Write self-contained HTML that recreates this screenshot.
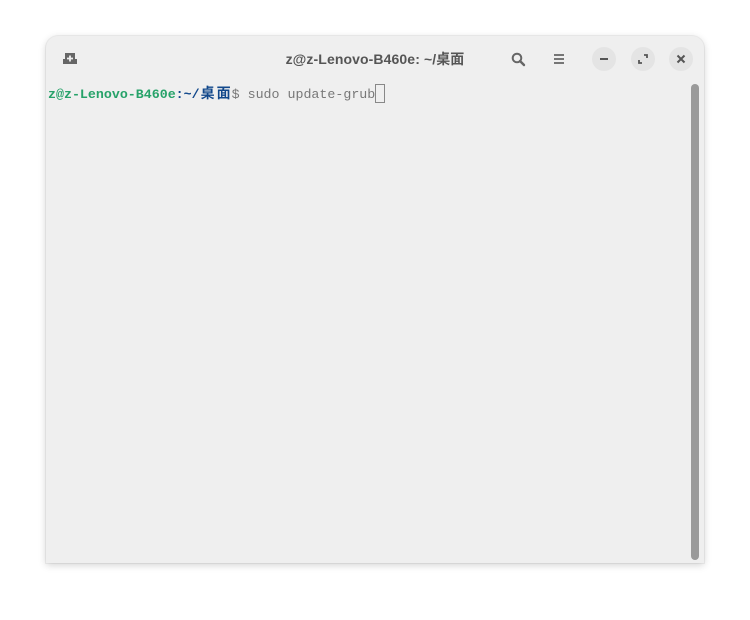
<!DOCTYPE html>
<html><head><meta charset="utf-8"><style>
html,body{margin:0;padding:0;width:750px;height:620px;background:#fff;overflow:hidden}
.win{position:absolute;left:46px;top:36px;width:658px;height:527px;background:#efefef;border-radius:12px 12px 0 0;box-shadow:0 2px 8px rgba(0,0,0,.18),0 0 0 1px rgba(0,0,0,.05)}
.title{position:absolute;left:0;right:0;top:49px;text-align:center;font:bold 14px "Liberation Sans","Noto Sans CJK SC",sans-serif;color:#555;letter-spacing:0.1px}
.btn{position:absolute;top:47px;width:24px;height:24px;border-radius:50%;background:#e4e4e4}
.term{position:absolute;left:48px;top:84px;font:13.3px "Liberation Mono","Noto Sans CJK SC",monospace;line-height:18px;white-space:pre;color:#787878}
.g{color:#26a269;font-weight:bold}.b{color:#12488b;font-weight:bold}
.w{display:inline-block;width:16px;text-align:center;font-size:14px}
.cur{display:inline-block;width:10px;height:19px;border:1px solid #888;vertical-align:-5px;box-sizing:border-box;margin-left:0}
.sb{position:absolute;left:691px;top:84px;width:8px;height:476px;border-radius:4px;background:#9a9a9a}
svg{position:absolute}
</style></head><body>
<div class="win"></div>
<svg style="left:60px;top:50px" width="20" height="18" viewBox="0 0 20 18">
<path d="M5 3h10v6h2v5H3V9h2z" fill="#666"/>
<path d="M10 5.5v6M7 8.5h6" stroke="#efefef" stroke-width="1.8"/>
</svg>
<div class="title" style="width:750px">z@z-Lenovo-B460e: ~/桌面</div>
<svg style="left:510px;top:51px" width="18" height="18" viewBox="0 0 18 18">
<circle cx="7" cy="7" r="4.3" fill="none" stroke="#666" stroke-width="2"/>
<path d="M10 10l4 4" stroke="#666" stroke-width="2.4" stroke-linecap="round"/>
</svg>
<svg style="left:551px;top:51px" width="16" height="16" viewBox="0 0 16 16">
<path d="M3 4h10M3 8h10M3 12h10" stroke="#666" stroke-width="1.8"/>
</svg>
<div class="btn" style="left:592px"></div>
<div class="btn" style="left:631px"></div>
<div class="btn" style="left:669px"></div>
<svg style="left:592px;top:47px" width="24" height="24"><path d="M8 12h8" stroke="#555" stroke-width="2"/></svg>
<svg style="left:631px;top:47px" width="24" height="24"><path d="M13 8h3v3M11 16H8v-3" fill="none" stroke="#555" stroke-width="1.8"/></svg>
<svg style="left:669px;top:47px" width="24" height="24"><path d="M8.5 8.5l7 7M15.5 8.5l-7 7" stroke="#555" stroke-width="2"/></svg>
<div class="term"><span class="g">z@z-Lenovo-B460e</span><span class="b">:~/<span class="w">桌</span><span class="w">面</span></span>$ sudo update-grub<span class="cur"></span></div>
<div class="sb"></div>
</body></html>
